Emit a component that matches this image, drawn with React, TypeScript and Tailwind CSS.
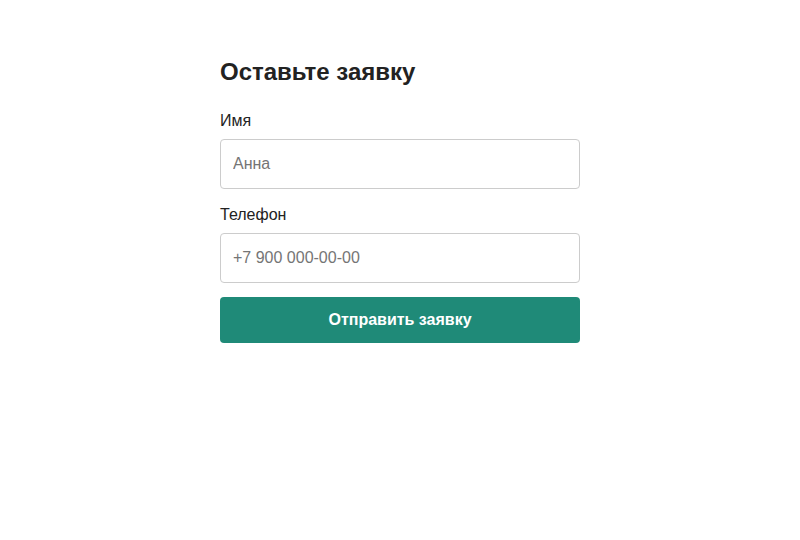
export default function App() {
  return (
    <div className="min-h-[540px] w-full bg-white" style={{ fontFamily: '"Liberation Sans", Arial, sans-serif' }}>
      <div className="mx-auto w-[360px] pt-[58px]">
        <h2 className="text-[24px] font-bold leading-[28px] text-[#222222]">Оставьте заявку</h2>
        <form className="mt-[26px] flex flex-col">
          <label className="block text-[16px] leading-[18px] text-[#222222]">Имя</label>
          <input
            className="mt-[9px] h-[50px] w-full rounded-[4px] border border-[#cccccc] px-[12px] text-[16px] text-[#222222] outline-none placeholder:text-[#757575]"
            placeholder="Анна"
          />
          <label className="mt-[17px] block text-[16px] leading-[18px] text-[#222222]">Телефон</label>
          <input
            className="mt-[9px] h-[50px] w-full rounded-[4px] border border-[#cccccc] px-[12px] text-[16px] text-[#222222] outline-none placeholder:text-[#757575]"
            placeholder="+7 900 000-00-00"
          />
          <button
            type="button"
            className="mt-[14px] h-[46px] w-full rounded-[4px] bg-[#1f8a78] text-[16px] font-bold text-white"
          >
            Отправить заявку
          </button>
        </form>
      </div>
    </div>
  );
}
